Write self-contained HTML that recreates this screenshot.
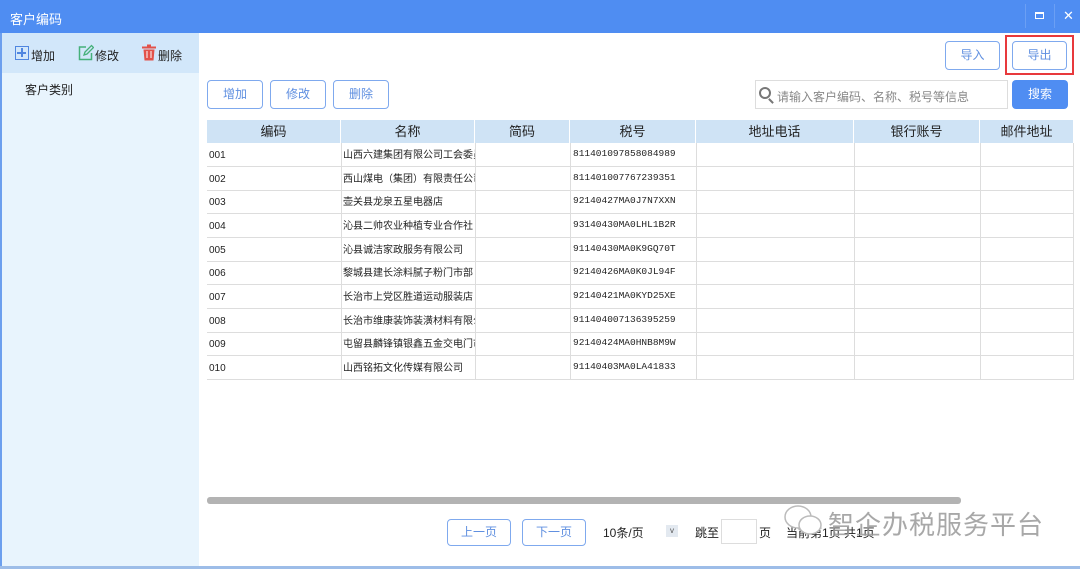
<!DOCTYPE html>
<html><head><meta charset="utf-8"><style>
*{margin:0;padding:0;box-sizing:border-box}
body{width:1080px;height:569px;overflow:hidden;background:#fff;font-family:"Liberation Sans","Noto Sans CJK SC",sans-serif;font-size:12px;color:#222;position:relative}
.abs{position:absolute}
.title{left:0;top:0;width:1080px;height:33px;background:#4f8df2;color:#fff;font-size:13px;padding:9px 0 0 10px}
.btn{position:absolute;border:1px solid #7fa9ee;border-radius:4px;color:#5f8fe0;font-size:12px;text-align:center;background:#fff}
.hd{position:absolute;top:120px;height:23px;background:#cfe3f5;left:207px;width:866px}
.hd div{position:absolute;top:0;height:23px;line-height:23px;text-align:center;font-size:13px;border-right:1px solid #fff}
.row{position:absolute;left:207px;width:866px;height:24px;border-bottom:1px solid #ddd}
.row div{position:absolute;top:1px;height:23px;line-height:23px;font-size:10px;white-space:nowrap;overflow:hidden}
.row .a{left:2px;width:130px}.row .b{left:136px;width:132px}.row .d{top:-1px;left:366px;width:124px;font-family:"Liberation Mono",monospace;font-size:9.5px}
.vl{position:absolute;top:143px;height:237px;width:1px;background:#ddd}
</style></head><body>
<div class="abs title">客户编码</div>
<div class="abs" style="left:1025px;top:4px;width:1px;height:24px;background:#6b9ff4"></div>
<div class="abs" style="left:1054px;top:4px;width:1px;height:24px;background:#6b9ff4"></div>
<div class="abs" style="left:1035px;top:12px;width:9px;height:7px;border:1px solid #fff;border-top-width:2px"></div>
<div class="abs" style="left:1063px;top:8px;color:#fff;font-size:13px">✕</div>
<div class="abs" style="left:0;top:33px;width:199px;height:536px;background:#e8f4fd"></div>
<div class="abs" style="left:0;top:33px;width:2px;height:536px;background:#6c9fee"></div>
<div class="abs" style="left:2px;top:33px;width:197px;height:40px;background:#d2e7fa"></div>
<div class="abs" style="left:15px;top:46px;width:14px;height:14px;border:1.5px solid #4f86e0"><div class="abs" style="left:5px;top:1px;width:1.5px;height:9px;background:#4f86e0"></div><div class="abs" style="left:1px;top:5px;width:9px;height:1.5px;background:#4f86e0"></div></div>
<div class="abs" style="left:31px;top:47px">增加</div>
<svg class="abs" style="left:78px;top:44px" width="16" height="17" viewBox="0 0 16 17"><path d="M8 3H1.5v12.5h12V9" fill="none" stroke="#45b07a" stroke-width="1.5"/><path d="M6 11l1-3 6.5-6.5 2 2L9 10z" fill="none" stroke="#45b07a" stroke-width="1.3"/></svg>
<div class="abs" style="left:95px;top:47px">修改</div>
<svg class="abs" style="left:142px;top:44px" width="14" height="17" viewBox="0 0 14 17"><rect x="0" y="2.5" width="14" height="2" fill="#e2524a"/><rect x="5" y="0.5" width="4" height="2" fill="#e2524a"/><path d="M1.5 5.5h11l-1 11h-9z" fill="#e2524a"/><path d="M5 7v7M9 7v7" stroke="#fff" stroke-width="1"/></svg>
<div class="abs" style="left:158px;top:47px">删除</div>
<div class="abs" style="left:25px;top:81px">客户类别</div>
<div class="btn" style="left:945px;top:41px;width:55px;height:29px;line-height:27px">导入</div>
<div class="abs" style="left:1005px;top:35px;width:69px;height:40px;border:2px solid #e8393c"></div>
<div class="btn" style="left:1012px;top:41px;width:55px;height:29px;line-height:27px">导出</div>
<div class="btn" style="left:207px;top:80px;width:56px;height:29px;line-height:27px">增加</div>
<div class="btn" style="left:270px;top:80px;width:56px;height:29px;line-height:27px">修改</div>
<div class="btn" style="left:333px;top:80px;width:56px;height:29px;line-height:27px">删除</div>
<div class="abs" style="left:755px;top:80px;width:253px;height:29px;border:1px solid #ddd;color:#888;font-size:12px;padding:7px 0 0 21px">请输入客户编码、名称、税号等信息</div>
<div class="abs" style="left:759px;top:87px;width:12px;height:12px;border:2px solid #777;border-radius:50%"></div>
<div class="abs" style="left:770px;top:98px;width:2px;height:6px;background:#777;transform:rotate(-45deg)"></div>
<div class="abs" style="left:1012px;top:80px;width:56px;height:29px;background:#4f8df2;border-radius:4px;color:#fff;text-align:center;line-height:29px">搜索</div>
<div class="hd">
<div style="left:0;width:134px">编码</div><div style="left:134px;width:134px">名称</div><div style="left:268px;width:95px">简码</div><div style="left:363px;width:126px">税号</div><div style="left:489px;width:158px">地址电话</div><div style="left:647px;width:126px">银行账号</div><div style="left:773px;width:93px;border:0">邮件地址</div>
</div>
<div class="row" style="top:143px"><div class="a">001</div><div class="b">山西六建集团有限公司工会委员</div><div class="d">811401097858084989</div></div>
<div class="row" style="top:167px"><div class="a">002</div><div class="b">西山煤电（集团）有限责任公司</div><div class="d">811401007767239351</div></div>
<div class="row" style="top:190px"><div class="a">003</div><div class="b">壶关县龙泉五星电器店</div><div class="d">92140427MA0J7N7XXN</div></div>
<div class="row" style="top:214px"><div class="a">004</div><div class="b">沁县二帅农业种植专业合作社</div><div class="d">93140430MA0LHL1B2R</div></div>
<div class="row" style="top:238px"><div class="a">005</div><div class="b">沁县诚洁家政服务有限公司</div><div class="d">91140430MA0K9GQ70T</div></div>
<div class="row" style="top:261px"><div class="a">006</div><div class="b">黎城县建长涂料腻子粉门市部</div><div class="d">92140426MA0K0JL94F</div></div>
<div class="row" style="top:285px"><div class="a">007</div><div class="b">长治市上党区胜道运动服装店</div><div class="d">92140421MA0KYD25XE</div></div>
<div class="row" style="top:309px"><div class="a">008</div><div class="b">长治市维康装饰装潢材料有限公</div><div class="d">911404007136395259</div></div>
<div class="row" style="top:332px"><div class="a">009</div><div class="b">屯留县麟锋镇银鑫五金交电门市</div><div class="d">92140424MA0HNB8M9W</div></div>
<div class="row" style="top:356px"><div class="a">010</div><div class="b">山西铭拓文化传媒有限公司</div><div class="d">91140403MA0LA41833</div></div>
<div class="vl" style="left:341px"></div><div class="vl" style="left:475px"></div><div class="vl" style="left:570px"></div><div class="vl" style="left:696px"></div><div class="vl" style="left:854px"></div><div class="vl" style="left:980px"></div><div class="vl" style="left:1073px"></div>
<div class="abs" style="left:207px;top:497px;width:754px;height:7px;background:#b3b3b3;border-radius:3px"></div>
<div class="btn" style="left:447px;top:519px;width:64px;height:27px;line-height:25px">上一页</div>
<div class="btn" style="left:522px;top:519px;width:64px;height:27px;line-height:25px">下一页</div>
<div class="abs" style="left:603px;top:524px">10条/页</div>
<div class="abs" style="left:666px;top:525px;width:12px;height:12px;background:#e3e9f0;font-size:8px;text-align:center;color:#555;line-height:12px">v</div>
<div class="abs" style="left:695px;top:524px">跳至</div>
<div class="abs" style="left:721px;top:519px;width:36px;height:25px;border:1px solid #ddd"></div>
<div class="abs" style="left:759px;top:524px">页</div>
<div class="abs" style="left:786px;top:524px">当前第1页 共1页</div>
<svg class="abs" style="left:782px;top:503px" width="44" height="36" viewBox="0 0 44 36"><ellipse cx="16" cy="14" rx="13" ry="11" fill="#fff" stroke="#bbb" stroke-width="1.5"/><ellipse cx="28" cy="22" rx="11" ry="9" fill="#fff" stroke="#bbb" stroke-width="1.5"/></svg>
<div class="abs" style="left:828px;top:505px;color:#999;font-size:26px;opacity:.85;letter-spacing:1px">智企办税服务平台</div>
<div class="abs" style="left:0;top:566px;width:1080px;height:3px;background:#9dbde8"></div>
</body></html>
